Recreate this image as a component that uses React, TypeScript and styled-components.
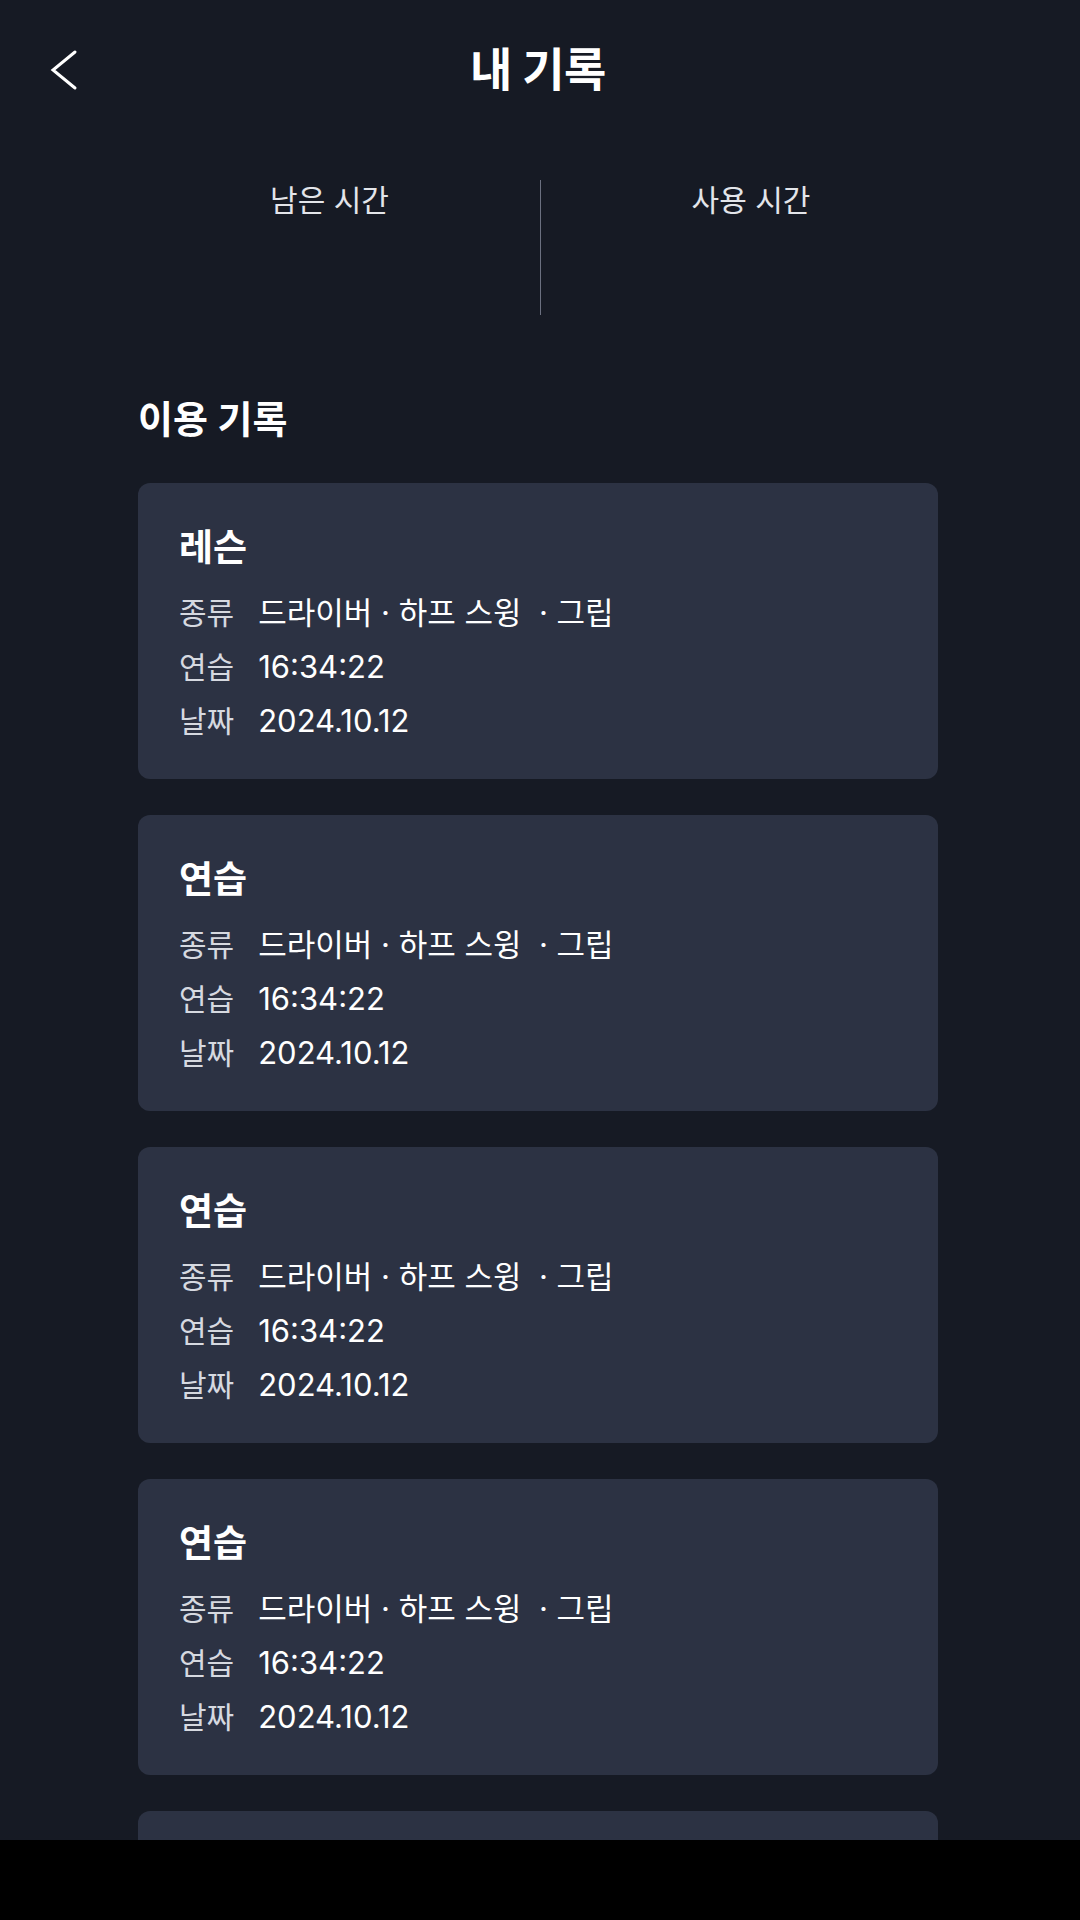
import React from "react";
import styled, { createGlobalStyle } from "styled-components";

const GlobalStyle = createGlobalStyle`
  html, body {
    margin: 0;
    padding: 0;
    background: #161a24;
  }
  * {
    box-sizing: border-box;
  }
`;

const Screen = styled.div`
  /* dimension */
  width: 1080px;
  height: 1920px;
  //display
  display: flex;
  flex-direction: column;
  overflow: hidden;
  background: #161a24;
  font-family: "Inter", "Noto Sans CJK KR", "Noto Sans", sans-serif;
  color: #ffffff;
`;

const Header = styled.header`
  height: 140px;
  padding: 0 49px;
  display: grid;
  grid-template-columns: 1fr auto 1fr;
  align-items: center;
`;

const BackButton = styled.button`
  width: 48px;
  height: 48px;
  padding: 0;
  border: none;
  background: transparent;
  display: flex;
  align-items: center;
  justify-content: flex-start;
  cursor: pointer;
`;

const Title = styled.h1`
  margin: 0 4px 0 0;
  font-size: 46px;
  font-weight: 700;
  letter-spacing: -0.5px;
  line-height: 1.2;
`;

const Stats = styled.section`
  margin: 40px auto 0;
  width: 842px;
  display: grid;
  grid-template-columns: 1fr 1fr;
`;

const StatBox = styled.div<{ $divider?: boolean }>`
  height: 135px;
  display: flex;
  justify-content: center;
  border-left: ${(p) => (p.$divider ? "1px solid #6b7080" : "none")};
`;

const StatLabel = styled.span`
  padding-top: 2px;
  font-size: 30px;
  line-height: 1.2;
  color: #e3e5ea;
`;

const SectionTitle = styled.h2`
  margin: 82px 0 0 138px;
  font-size: 38px;
  font-weight: 600;
  line-height: 1.2;
`;

const RecordList = styled.div`
  flex: 1;
  overflow: hidden;
  margin-top: 40px;
  padding-left: 138px;
  display: flex;
  flex-direction: column;
  gap: 36px;
`;

const Card = styled.article`
  width: 800px;
  flex: 0 0 auto;
  padding: 43px 41px 31px;
  background: #2c3243;
  border-radius: 12px;
`;

const CardTitle = styled.h3`
  margin: 0 0 16px;
  font-size: 37px;
  font-weight: 700;
  line-height: 44px;
`;

const InfoGrid = styled.dl`
  margin: 0;
  display: grid;
  grid-template-columns: auto 1fr;
  column-gap: 24px;
`;

const InfoLabel = styled.dt`
  font-size: 30px;
  line-height: 54px;
  color: #d6d9e0;
`;

const InfoValue = styled.dd`
  margin: 0;
  font-size: 31px;
  line-height: 54px;
  color: #ffffff;
  white-space: pre;
`;

const NavBar = styled.div`
  height: 80px;
  flex: 0 0 80px;
  background: #000000;
`;

interface RecordProps {
  kind: string;
  category: string;
  time: string;
  date: string;
}

const records: RecordProps[] = [
  { kind: "레슨", category: "드라이버 · 하프 스윙  · 그립", time: "16:34:22", date: "2024.10.12" },
  { kind: "연습", category: "드라이버 · 하프 스윙  · 그립", time: "16:34:22", date: "2024.10.12" },
  { kind: "연습", category: "드라이버 · 하프 스윙  · 그립", time: "16:34:22", date: "2024.10.12" },
  { kind: "연습", category: "드라이버 · 하프 스윙  · 그립", time: "16:34:22", date: "2024.10.12" },
  { kind: "연습", category: "드라이버 · 하프 스윙  · 그립", time: "16:34:22", date: "2024.10.12" },
];

const RecordCard: React.FC<RecordProps> = ({ kind, category, time, date }) => {
  return (
    <Card>
      <CardTitle>{kind}</CardTitle>
      <InfoGrid>
        <InfoLabel>종류</InfoLabel>
        <InfoValue>{category}</InfoValue>
        <InfoLabel>연습</InfoLabel>
        <InfoValue>{time}</InfoValue>
        <InfoLabel>날짜</InfoLabel>
        <InfoValue>{date}</InfoValue>
      </InfoGrid>
    </Card>
  );
};

const ChevronLeft = () => (
  <svg width="30" height="44" viewBox="0 0 30 44" fill="none">
    <polyline
      points="26,4 4,22 26,40"
      stroke="#ffffff"
      strokeWidth="3"
      strokeLinecap="round"
      strokeLinejoin="miter"
    />
  </svg>
);

const App = () => {
  return (
    <>
      <GlobalStyle />
      <Screen>
        <Header>
          <BackButton aria-label="뒤로">
            <ChevronLeft />
          </BackButton>
          <Title>내 기록</Title>
          <div />
        </Header>
        <Stats>
          <StatBox>
            <StatLabel>남은 시간</StatLabel>
          </StatBox>
          <StatBox $divider>
            <StatLabel>사용 시간</StatLabel>
          </StatBox>
        </Stats>
        <SectionTitle>이용 기록</SectionTitle>
        <RecordList>
          {records.map((r, i) => (
            <RecordCard key={i} {...r} />
          ))}
        </RecordList>
        <NavBar />
      </Screen>
    </>
  );
};

export default App;
